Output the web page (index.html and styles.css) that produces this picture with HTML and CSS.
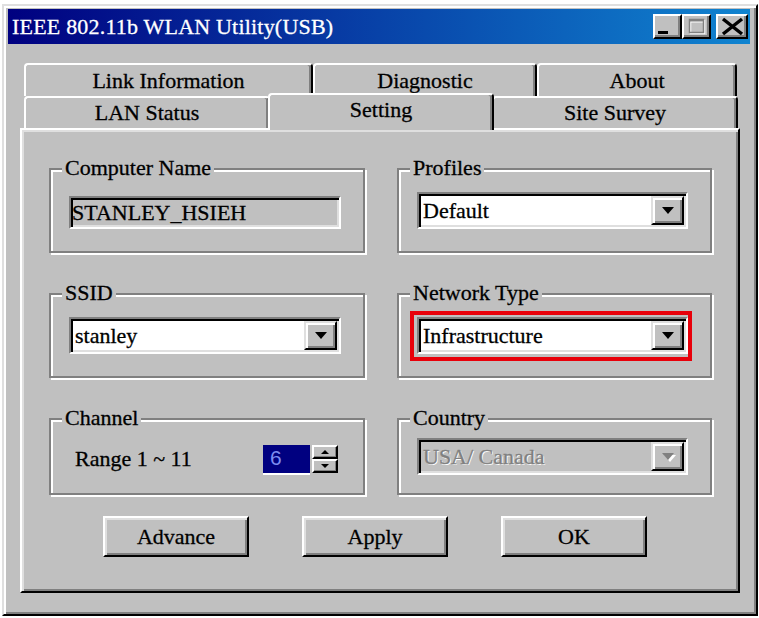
FILE: index.html
```html
<!DOCTYPE html>
<html lang="en">
<head>
    <meta charset="UTF-8">
    <meta name="viewport" content="width=device-width, initial-scale=1.0">
    <title>IEEE 802.11b WLAN Utility(USB)</title>
    <link rel="stylesheet" href="styles.css">
</head>
<body>

<div class="window">
    <div class="titlebar">
        <span class="title">IEEE 802.11b WLAN Utility(USB)</span>
        <div class="caption-buttons">
            <span class="cap-btn">
                <svg width="25" height="21" viewBox="0 0 25 21"><rect x="3" y="15" width="10" height="3" fill="#000"/></svg>
            </span>
            <span class="cap-btn">
                <svg width="25" height="21" viewBox="0 0 25 21">
                    <rect x="6.5" y="4.5" width="14" height="13" fill="none" stroke="#fff" stroke-width="1.5"/>
                    <rect x="6.5" y="4.5" width="14" height="2" fill="#fff"/>
                    <rect x="5.5" y="3.5" width="14" height="13" fill="none" stroke="#808080" stroke-width="1.5"/>
                    <rect x="5.5" y="3.5" width="14" height="2" fill="#808080"/>
                </svg>
            </span>
            <span class="cap-btn close">
                <svg width="28" height="21" viewBox="0 0 28 21"><path d="M5 3 L24 18 M24 3 L5 18" stroke="#000" stroke-width="3.5"/></svg>
            </span>
        </div>
    </div>

    <div class="tabs">
        <div class="tab-row back">
            <div class="tab tab-link">Link Information</div>
            <div class="tab tab-diag">Diagnostic</div>
            <div class="tab tab-about">About</div>
        </div>
        <div class="tab-row front">
            <div class="tab tab-lan">LAN Status</div>
            <div class="tab tab-setting selected">Setting</div>
            <div class="tab tab-site">Site Survey</div>
        </div>
    </div>

    <div class="panel">
        <div class="groups">
            <div class="group">
                <span class="legend">Computer Name</span>
                <div class="field readonly">STANLEY_HSIEH</div>
            </div>
            <div class="group">
                <span class="legend">Profiles</span>
                <div class="combo">
                    <span class="value">Default</span>
                    <span class="drop"><svg width="12" height="7" viewBox="0 0 12 7"><polygon points="0,0 12,0 6,7" fill="#000"/></svg></span>
                </div>
            </div>
            <div class="group">
                <span class="legend">SSID</span>
                <div class="combo">
                    <span class="value">stanley</span>
                    <span class="drop"><svg width="12" height="7" viewBox="0 0 12 7"><polygon points="0,0 12,0 6,7" fill="#000"/></svg></span>
                </div>
            </div>
            <div class="group">
                <span class="legend">Network Type</span>
                <div class="combo marked">
                    <span class="value">Infrastructure</span>
                    <span class="drop"><svg width="12" height="7" viewBox="0 0 12 7"><polygon points="0,0 12,0 6,7" fill="#000"/></svg></span>
                </div>
            </div>
            <div class="group channel">
                <span class="legend">Channel</span>
                <span class="range">Range 1 ~ 11</span>
                <div class="spin">
                    <span class="spin-value">6</span>
                    <span class="spin-buttons">
                        <span class="spin-btn"><svg width="8" height="4" viewBox="0 0 8 4"><polygon points="4,0 8,4 0,4" fill="#000"/></svg></span>
                        <span class="spin-btn"><svg width="8" height="4" viewBox="0 0 8 4"><polygon points="0,0 8,0 4,4" fill="#000"/></svg></span>
                    </span>
                </div>
            </div>
            <div class="group">
                <span class="legend">Country</span>
                <div class="combo disabled">
                    <span class="value">USA/ Canada</span>
                    <span class="drop"><svg width="14" height="9" viewBox="0 0 14 9"><polygon points="2,2 14,2 8,9" fill="#fff"/><polygon points="0,0 12,0 6,7" fill="#808080"/></svg></span>
                </div>
            </div>
        </div>

        <div class="buttons">
            <span class="button">Advance</span>
            <span class="button">Apply</span>
            <span class="button">OK</span>
        </div>
    </div>
</div>

</body>
</html>
```

FILE: styles.css
```css
body {
    margin: 0;
    background-color: #fff;
    font-family: "Liberation Serif", "DejaVu Serif", serif;
    font-size: 22px;
    color: #000;
    -webkit-text-stroke: 0.3px;
}

/* outer frame */
.window {
    margin: 4px 0 0 2px;
    width: 756px;
    height: 612px;
    box-sizing: border-box;
    padding: 3px 6px 0 4px;
    background-color: #c0c0c0;
    border: 2px solid;
    border-color: #dfdfdf #000 #000 #dfdfdf;
    box-shadow: inset 2px 2px 0 #fff, inset -2px -2px 0 #808080;
}

.titlebar {
    height: 35px;
    display: flex;
    align-items: center;
    justify-content: space-between;
    padding-left: 4px;
    background: linear-gradient(to right, #000080, #1084d0);
    color: #fff;
}

.title {
    line-height: 26px;
    padding-top: 1px;
    letter-spacing: 0.2px;
}

.caption-buttons {
    display: flex;
    margin-right: 2px;
}

.cap-btn {
    width: 29px;
    height: 25px;
    box-sizing: border-box;
    display: flex;
    background-color: #c0c0c0;
    border: 2px solid;
    border-color: #fff #000 #000 #fff;
    box-shadow: inset -2px -2px 0 #808080;
}

.cap-btn.close {
    width: 32px;
    margin-left: 5px;
}

/* tab strip */
.tabs {
    margin: 19px 0 0 16px;
}

.tab-row {
    display: flex;
}

.tab {
    box-sizing: border-box;
    display: flex;
    justify-content: center;
    align-items: center;
    background-color: #c0c0c0;
    border-top: 2px solid #fff;
    border-left: 2px solid #fff;
    border-right: 2px solid #000;
    border-radius: 4px 4px 0 0;
    box-shadow: inset -2px 0 0 #808080;
    line-height: 26px;
}

.back .tab {
    height: 33px;
}

.front .tab {
    height: 32px;
}

.tab-link { width: 289px; }
.tab-diag { width: 224px; }
.tab-about { width: 200px; }
.tab-lan { width: 246px; }
.tab-setting { width: 226px; }
.tab-site { width: 246px; }

.tab.selected {
    position: relative;
    z-index: 1;
    height: 37px;
    margin: -3px -2px -2px;
    align-items: flex-start;
    padding-top: 2px;
}

.panel {
    width: 720px;
    height: 465px;
    box-sizing: border-box;
    margin-left: 12px;
    padding: 38px 0 0 27px;
    border: 2px solid;
    border-color: #fff #000 #000 #fff;
    box-shadow: inset 2px 2px 0 #dfdfdf, inset -2px -2px 0 #808080;
}

.groups {
    display: grid;
    grid-template-columns: 316px 315px;
    grid-template-rows: 85px 85px 77px;
    column-gap: 32px;
    row-gap: 40px;
}

/* etched group box */
.group {
    position: relative;
    display: flex;
    align-items: center;
    box-sizing: border-box;
    padding: 0 22px 0 18px;
    border: 2px solid #808080;
    box-shadow: inset 2px 2px 0 #fff, 2px 2px 0 #fff;
}

.legend {
    position: absolute;
    top: -14px;
    left: 11px;
    padding: 0 3px;
    line-height: 24px;
    background-color: #c0c0c0;
}

.field,
.combo {
    flex: 1;
    display: flex;
    box-sizing: border-box;
    padding: 2px;
    background-color: #fff;
    border: 2px solid;
    border-color: #808080 #fff #fff #808080;
    box-shadow: inset 2px 2px 0 #000, inset -2px -2px 0 #dfdfdf;
}

.field {
    height: 33px;
    margin-top: 4px;
    align-items: center;
    padding-left: 1px;
}

.field.readonly {
    background-color: #c0c0c0;
}

.combo {
    height: 37px;
    position: relative;
}

.combo .value {
    flex: 1;
    display: flex;
    align-items: center;
    padding-left: 2px;
}

.combo .drop {
    width: 33px;
    box-sizing: border-box;
    display: flex;
    justify-content: center;
    align-items: center;
    background-color: #c0c0c0;
    border: 2px solid;
    border-color: #dfdfdf #000 #000 #dfdfdf;
    box-shadow: inset 2px 2px 0 #fff, inset -2px -2px 0 #808080;
}

.combo.disabled {
    background-color: #c0c0c0;
    color: #808080;
}

.combo.disabled .value {
    text-shadow: 1px 1px 0 #fff;
}

.combo.disabled .drop svg {
    margin: 2px 0 0 2px;
}

/* red marker round the network type box */
.combo.marked::after {
    content: "";
    position: absolute;
    top: -8px;
    left: -9px;
    right: -6px;
    bottom: -9px;
    border: 4px solid #e8000a;
}

.channel {
    padding-left: 24px;
    padding-right: 25px;
}

.range {
    margin-top: 4px;
}

.spin {
    margin-left: auto;
    margin-top: 6px;
    display: flex;
}

.spin-value {
    width: 47px;
    height: 30px;
    box-sizing: border-box;
    padding-left: 7px;
    line-height: 26px;
    background-color: #000080;
    color: #7d8cf0;
    font-family: "Liberation Sans", Arial, sans-serif;
    font-size: 21px;
    -webkit-text-stroke: 0;
    border-bottom: 2px solid #fff;
}

.spin-buttons {
    display: flex;
    flex-direction: column;
    margin-left: 2px;
}

.spin-btn {
    width: 26px;
    height: 14px;
    box-sizing: border-box;
    display: flex;
    justify-content: center;
    align-items: center;
    background-color: #c0c0c0;
    border: 2px solid;
    border-color: #fff #000 #000 #fff;
    box-shadow: inset -1px -1px 0 #808080;
}

.buttons {
    display: flex;
    gap: 53px;
    margin: 21px 0 0 54px;
}

.button {
    width: 146px;
    height: 41px;
    box-sizing: border-box;
    display: flex;
    justify-content: center;
    align-items: center;
    background-color: #c0c0c0;
    border: 2px solid;
    border-color: #fff #000 #000 #fff;
    box-shadow: inset 2px 2px 0 #dfdfdf, inset -2px -2px 0 #808080;
}
```
